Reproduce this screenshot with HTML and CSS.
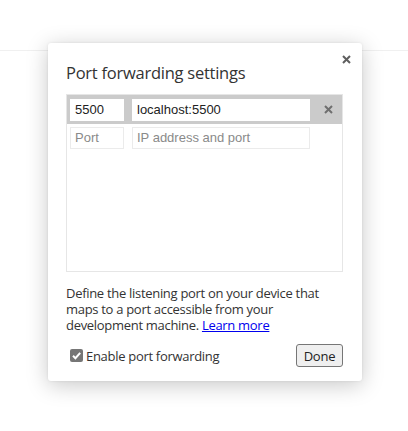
FILE: index.html
```html
<!DOCTYPE html>
<html>
<head>
<meta charset="utf-8">
<link rel="stylesheet" href="styles.css">
</head>
<body>
<div class="topbar"></div>
<div class="dialog">
  <button class="close" aria-label="Close">
    <svg width="9" height="9" viewBox="0 0 9 9"><path d="M1 1L8 8M8 1L1 8" stroke="#5f5f5f" stroke-width="2"/></svg>
  </button>
  <h1 class="title">Port forwarding settings</h1>
  <div class="list">
    <div class="row row-filled">
      <input class="field port" value="5500">
      <input class="field addr" value="localhost:5500">
      <span class="del">
        <svg width="9" height="9" viewBox="0 0 9 9"><path d="M1 1L8 8M8 1L1 8" stroke="#6f6f6f" stroke-width="2"/></svg>
      </span>
    </div>
    <div class="row row-empty">
      <input class="field port empty" placeholder="Port">
      <input class="field addr empty" placeholder="IP address and port">
    </div>
  </div>
  <p class="desc">Define the listening port on your device that maps to a port accessible from your development machine. <a href="#">Learn more</a></p>
  <div class="footer">
    <label class="check">
      <span class="box"><svg width="13" height="13" viewBox="0 0 13 13"><path d="M3 6.8L5.4 9.2L10.2 3.8" fill="none" stroke="#fff" stroke-width="2"/></svg></span>
      <span>Enable port forwarding</span>
    </label>
    <button class="done">Done</button>
  </div>
</div>
</body>
</html>
```
FILE: styles.css
```css
html, body {
  margin: 0;
  padding: 0;
  background: #fff;
  height: 431px;
  overflow: hidden;
  font-family: "Segoe UI", "Open Sans", "Noto Sans", sans-serif;
}
.topbar {
  height: 50px;
  border-bottom: 1px solid #f0f0f0;
}
.dialog {
  position: absolute;
  left: 48px;
  top: 43px;
  width: 314px;
  height: 338px;
  box-sizing: border-box;
  padding: 18px 19px 0 18px;
  background: #fff;
  border-radius: 3px;
  box-shadow: 0 4px 22px rgba(0,0,0,0.22), 0 0 3px rgba(0,0,0,0.08);
  color: #222;
}
.close {
  position: absolute;
  right: 10px;
  top: 10px;
  width: 12px;
  height: 12px;
  padding: 0;
  border: 0;
  background: none;
  display: flex;
  align-items: center;
  justify-content: center;
}
.title {
  margin: 0;
  font-size: 16.5px;
  font-weight: 400;
  line-height: 24px;
  color: #333;
  letter-spacing: -0.25px;
}
.list {
  margin-top: 9px;
  height: 178px;
  box-sizing: border-box;
  border: 1px solid #e6e6e6;
}
.row {
  display: flex;
  align-items: center;
  padding: 0 0 0 3px;
  gap: 8px;
}
.row-filled {
  background: #cbcbcb;
  height: 29px;
}
.row-empty {
  height: 27px;
}
.field {
  box-sizing: border-box;
  height: 22px;
  margin: 0;
  border: 1px solid transparent;
  background: #fff;
  font-family: "Liberation Sans", Arial, sans-serif;
  font-size: 13px;
  color: #222;
  padding: 0 4px;
  outline: none;
}
.field.port { width: 54px; }
.field.addr { width: 178px; }
.field.empty {
  border-color: #ebebeb;
  height: 22px;
}
.field::placeholder { color: #8a8a8a; }
.del {
  display: flex;
  margin-left: 6px;
}
.desc {
  margin: 13px 0 0;
  font-size: 13px;
  line-height: 16px;
  color: #333;
  letter-spacing: -0.3px;
}
.desc a { color: #0000ee; }
.footer {
  margin-top: 11px;
  display: flex;
  align-items: center;
  justify-content: space-between;
  padding-left: 4px;
}
.check {
  display: flex;
  align-items: center;
  gap: 3px;
  font-size: 13px;
  color: #333;
  letter-spacing: -0.3px;
}
.box {
  width: 13px;
  height: 13px;
  border-radius: 2px;
  background: #767676;
  display: flex;
}
.done {
  width: 47px;
  height: 23px;
  box-sizing: border-box;
  border: 1px solid #767676;
  border-radius: 3px;
  background: #efefef;
  font-family: "Segoe UI", "Open Sans", "Noto Sans", sans-serif;
  font-size: 13px;
  letter-spacing: -0.2px;
  color: #222;
  padding: 0;
}
```
